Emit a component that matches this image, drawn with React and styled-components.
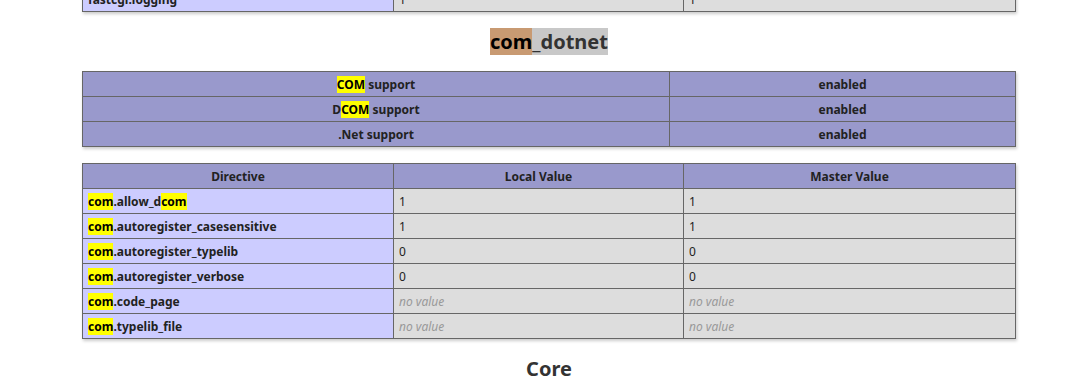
import React from 'react'
import styled, { createGlobalStyle } from 'styled-components'

const Global = createGlobalStyle`
  html, body { margin: 0; padding: 0; background: #fff; overflow: hidden; }
  body { color: #222; font-family: "Noto Sans", "Liberation Sans", sans-serif; }
`

const Page = styled.div`
  width: 934px;
  margin-left: 82px;
  margin-top: -14px;
`

const Table = styled.table`
  border-collapse: collapse;
  border: 0;
  width: 934px;
  box-shadow: 1px 2px 3px #ccc;
  margin: ${p => p.$first ? '0' : '16px'} 0 16px;
  font-size: 12px;
`

const Cell = styled.td`
  border: 1px solid #666;
  padding: 0 5px;
  height: 25px;
  box-sizing: border-box;
  vertical-align: middle;
  text-align: ${p => p.$center ? 'center' : 'left'};
  background: ${p => p.$kind === 'e' ? '#ccf' : p.$kind === 'h' ? '#99c' : '#ddd'};
  font-weight: ${p => p.$kind === 'v' ? 'normal' : 'bold'};
  width: ${p => p.$w || 'auto'};
  color: #222;
`

const NoValue = styled.i`
  color: #999;
`

const Mark = styled.span`
  background: #ff0;
  color: #000;
`

const Heading = styled.h2`
  font-size: 20px;
  font-weight: bold;
  text-align: center;
  margin: 0;
  line-height: 27px;
  color: #333;
`

const HeadMark = styled.span`
  background: ${p => p.$active ? '#c89a72' : '#c8c8c8'};
  color: ${p => p.$active ? '#000' : '#333'};
`

const hl = text => {
  const parts = text.split(/(com)/i)
  return parts.map((p, i) => (p.toLowerCase() === 'com' ? <Mark key={i}>{p}</Mark> : p))
}

const support = [
  ['COM support', 'enabled'],
  ['DCOM support', 'enabled'],
  ['.Net support', 'enabled'],
]

const directives = [
  ['com.allow_dcom', '1', '1'],
  ['com.autoregister_casesensitive', '1', '1'],
  ['com.autoregister_typelib', '0', '0'],
  ['com.autoregister_verbose', '0', '0'],
  ['com.code_page', null, null],
  ['com.typelib_file', null, null],
]

const Val = ({ v }) => (v === null ? <NoValue>no value</NoValue> : v)

export default function App() {
  return (
    <>
      <Global />
      <Page>
        <Table $first>
          <tbody>
            <tr>
              <Cell $kind="e" $w="311px">fastcgi.logging</Cell>
              <Cell $kind="v" $w="290px">1</Cell>
              <Cell $kind="v">1</Cell>
            </tr>
          </tbody>
        </Table>
        <Heading>
          <HeadMark $active>com</HeadMark>
          <HeadMark>_dotnet</HeadMark>
        </Heading>
        <Table>
          <tbody>
            {support.map(([a, b]) => (
              <tr key={a}>
                <Cell $kind="h" $center $w="587px">{hl(a)}</Cell>
                <Cell $kind="h" $center>{b}</Cell>
              </tr>
            ))}
          </tbody>
        </Table>
        <Table>
          <tbody>
            <tr>
              <Cell $kind="h" $center $w="311px">Directive</Cell>
              <Cell $kind="h" $center $w="290px">Local Value</Cell>
              <Cell $kind="h" $center>Master Value</Cell>
            </tr>
            {directives.map(([n, l, m]) => (
              <tr key={n}>
                <Cell $kind="e">{hl(n)}</Cell>
                <Cell $kind="v"><Val v={l} /></Cell>
                <Cell $kind="v"><Val v={m} /></Cell>
              </tr>
            ))}
          </tbody>
        </Table>
        <Heading>Core</Heading>
      </Page>
    </>
  )
}
